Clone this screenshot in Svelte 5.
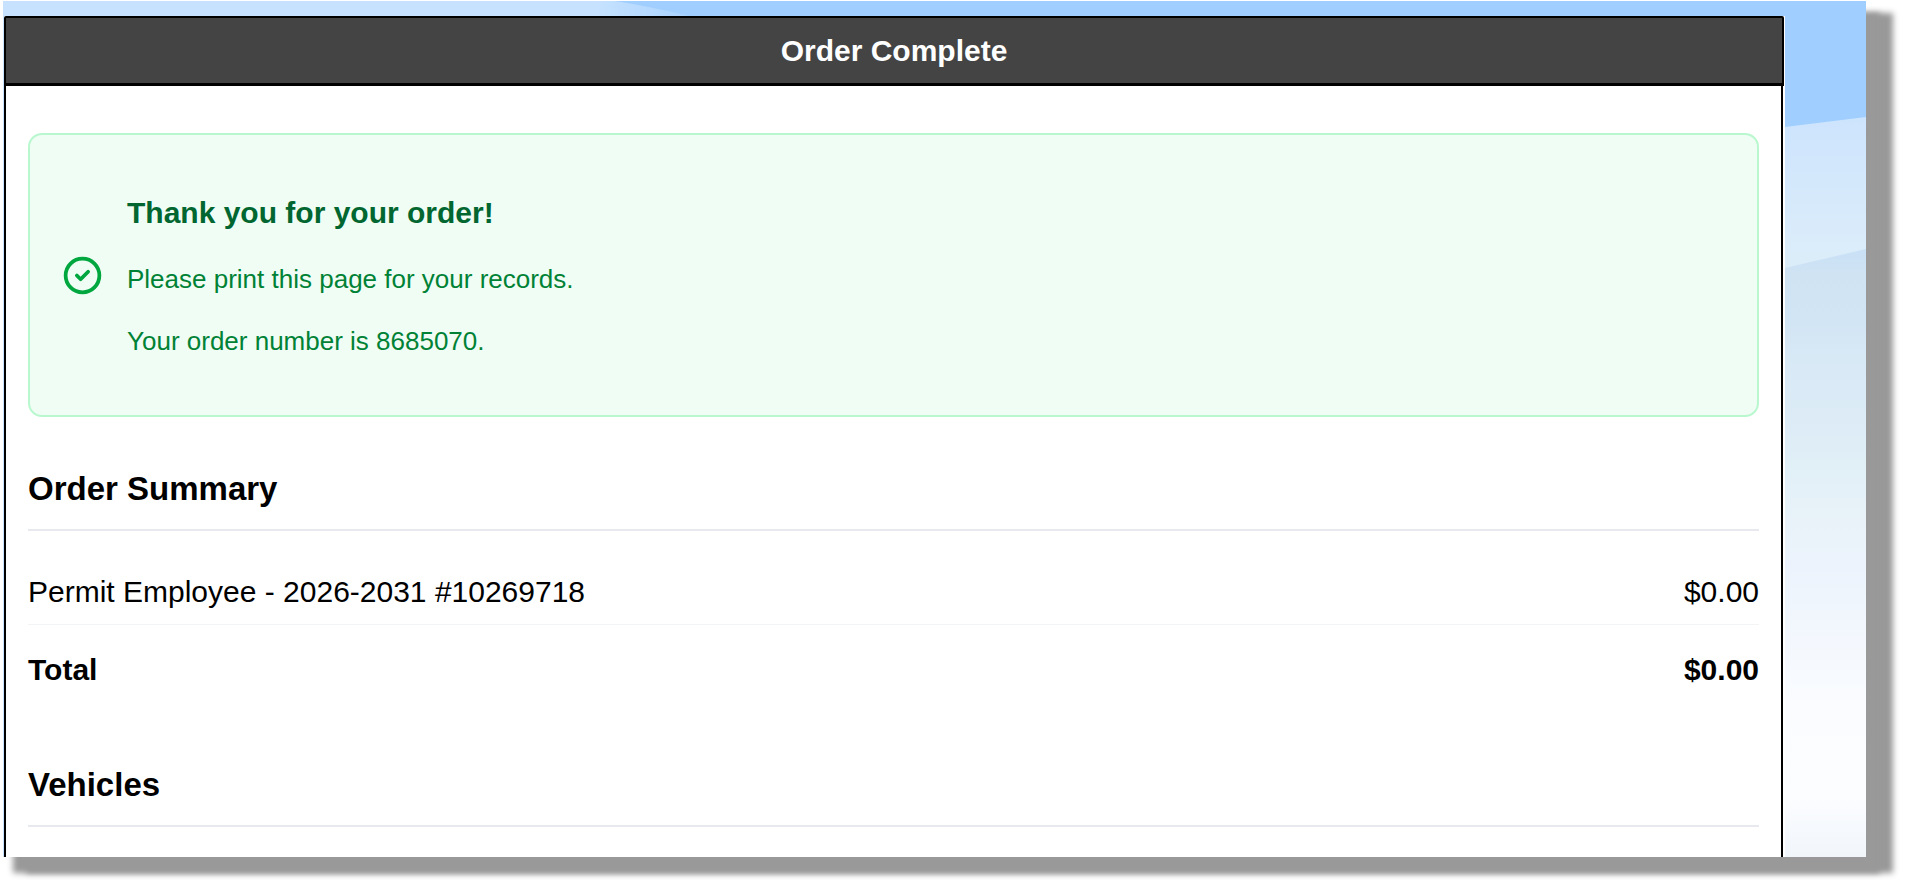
<script>
	const order = {
		number: '8685070',
		items: [{ name: 'Permit Employee - 2026-2031 #10269718', price: 0 }]
	};

	const money = (value) => `$${value.toFixed(2)}`;

	let total = $derived(order.items.reduce((sum, item) => sum + item.price, 0));
</script>

<div class="page">
	<div class="frame">
		<svg class="sky" viewBox="0 0 1863 856" preserveAspectRatio="none" aria-hidden="true">
			<defs>
				<linearGradient id="edge" x1="0" y1="0" x2="1" y2="0">
					<stop offset="0" stop-color="#c6e2ff" />
					<stop offset="0.86" stop-color="#c6e2ff" />
					<stop offset="1" stop-color="#a8d2ff" />
				</linearGradient>
				<linearGradient id="cloud" x1="0" y1="0" x2="0" y2="1">
					<stop offset="0" stop-color="#cde4fd" />
					<stop offset="0.8" stop-color="#dcedfa" />
				</linearGradient>
				<linearGradient id="haze" x1="0" y1="0" x2="0" y2="1">
					<stop offset="0" stop-color="#c8e0f6" />
					<stop offset="0.04" stop-color="#cfe3f3" />
					<stop offset="0.12" stop-color="#d2e5f4" />
					<stop offset="0.18" stop-color="#d8e9f6" />
					<stop offset="0.3" stop-color="#ddecf6" />
					<stop offset="0.37" stop-color="#e2f0f7" />
					<stop offset="0.45" stop-color="#e9f2f9" />
					<stop offset="0.52" stop-color="#ecf3fc" />
					<stop offset="0.75" stop-color="#fafcff" />
					<stop offset="0.9" stop-color="#fcfdff" />
					<stop offset="1" stop-color="#f1f6fb" />
				</linearGradient>
			</defs>
			<rect width="1863" height="856" fill="#a0cfff" />
			<path d="M0 0H612Q650 6 690 16H0Z" fill="url(#edge)" />
			<path d="M0 0H20V856H0Z" fill="#c6e2ff" />
			<path d="M1700 136L1782 126L1863 116V290H1700Z" fill="url(#cloud)" />
			<path d="M1700 280L1782 267L1863 248V856H1700Z" fill="url(#haze)" />
		</svg>

		<main class="panel">
			<h1>Order Complete</h1>

			<div class="body">
				<div class="alert" role="status">
					<svg viewBox="0 0 24 24" fill="none" stroke="currentColor" stroke-width="2" stroke-linecap="round" stroke-linejoin="round" aria-hidden="true">
						<path d="M9 12l2 2 4-4m6 2a9 9 0 11-18 0 9 9 0 0118 0z" />
					</svg>
					<div class="message">
						<h2>Thank you for your order!</h2>
						<p>Please print this page for your records.</p>
						<p>Your order number is {order.number}.</p>
					</div>
				</div>

				<section>
					<h2>Order Summary</h2>
					<table>
						<tbody>
							{#each order.items as item}
								<tr>
									<td>{item.name}</td>
									<td class="price">{money(item.price)}</td>
								</tr>
							{/each}
						</tbody>
						<tfoot>
							<tr>
								<th scope="row">Total</th>
								<td class="price">{money(total)}</td>
							</tr>
						</tfoot>
					</table>
				</section>

				<section>
					<h2>Vehicles</h2>
				</section>
			</div>
		</main>
	</div>
</div>

<style>
	:global(body) {
		margin: 0;
		background: #ffffff;
		font-family: 'Liberation Sans', Arial, sans-serif;
		color: #000000;
	}

	.page {
		padding: 1px 40px 32px 3px;
	}

	.frame {
		position: relative;
		display: flow-root;
		box-shadow:
			12px 14px 6px 2px #999999,
			25px 14px 6px 2px #999999;
	}

	.sky {
		position: absolute;
		inset: 0;
		width: 100%;
		height: 100%;
	}

	.panel {
		position: relative;
		margin: 15px 81px 0 1px;
		padding-right: 1px;
		background: #ffffff;
	}

	h1,
	h2,
	p {
		margin: 0;
	}

	h1 {
		padding: 15px;
		border: 2px solid #000000;
		border-bottom-width: 3px;
		border-radius: 2px 2px 0 0;
		background: #444444;
		color: #ffffff;
		font-size: 30px;
		line-height: 35px;
		text-align: center;
	}

	.body {
		margin-right: 1px;
		padding: 47px 22px 30px;
		border: solid #000000;
		border-width: 0 2px;
	}

	.alert {
		display: flex;
		align-items: center;
		gap: 22px;
		padding: 57px 30px;
		border: 2px solid #b9f8cf;
		border-radius: 14px;
		background: #f0fdf4;
		color: #008236;
	}

	.alert svg {
		flex: none;
		width: 45px;
		height: 45px;
		color: #00a63e;
	}

	.message {
		display: flex;
		flex-direction: column;
		gap: 28px;
	}

	.message h2 {
		color: #016630;
		font-size: 30px;
		line-height: 42px;
	}

	.message p {
		font-size: 26px;
		line-height: 34px;
	}

	section {
		margin-top: 52px;
	}

	section h2 {
		padding-bottom: 20px;
		border-bottom: 2px solid #e8e9ee;
		font-size: 33px;
		line-height: 40px;
	}

	table {
		width: 100%;
		margin-top: 29px;
		border-spacing: 0;
		font-size: 30px;
		line-height: 36px;
	}

	th,
	td {
		padding: 14px 0;
		text-align: left;
	}

	tbody td {
		border-bottom: 1px solid #f3f4f6;
	}

	tfoot th,
	tfoot td {
		padding: 27px 0 25px;
		font-weight: 700;
	}

	.price {
		text-align: right;
	}
</style>
